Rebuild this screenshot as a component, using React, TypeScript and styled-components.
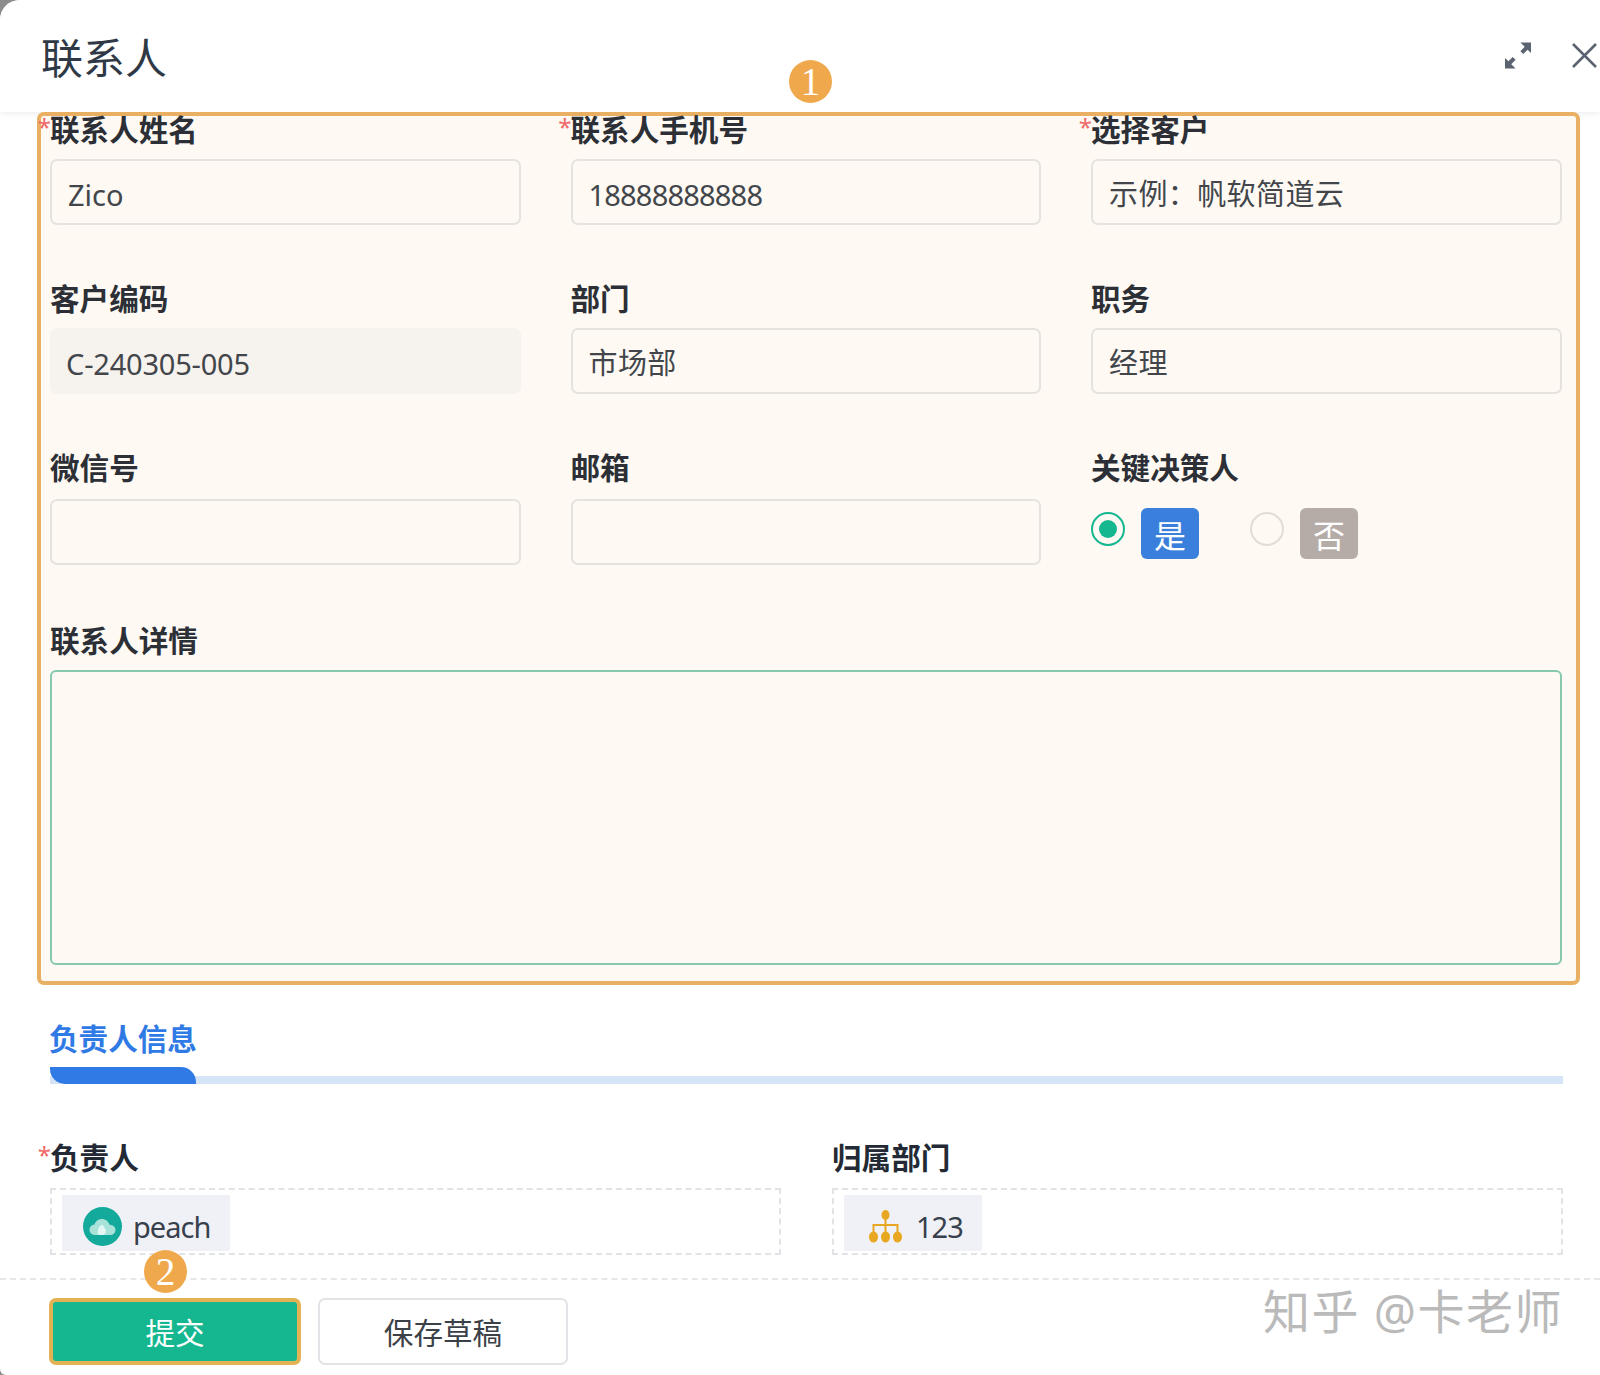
import React from "react";
import styled, { createGlobalStyle } from "styled-components";

const GlobalStyle = createGlobalStyle`
  html, body {
    margin: 0;
    padding: 0;
    background: #8c8c8c;
  }
  * {
    box-sizing: border-box;
  }
`;

const Modal = styled.div`
  position: relative;
  width: 1600px;
  height: 1375px;
  overflow: hidden;
  background: #ffffff;
  border-radius: 20px 0 0 6px;
  font-family: "Noto Sans", "Noto Sans CJK SC", sans-serif;
  color: #2f3640;
`;

const Header = styled.header`
  display: flex;
  align-items: center;
  justify-content: space-between;
  height: 112px;
  padding: 0 3px 0 41px;
  background: #ffffff;
  box-shadow: 0 2px 6px rgba(0, 0, 0, 0.07);
`;

const Title = styled.h1`
  margin: 0 0 -4px;
  font-size: 42px;
  font-weight: 400;
  line-height: 56px;
  color: #2f3946;
`;

const HeaderActions = styled.div`
  display: flex;
  align-items: center;
  gap: 41px;
  margin-bottom: 2px;
`;

const IconButton = styled.button`
  display: flex;
  padding: 0;
  border: 0;
  background: none;
`;

const FormBox = styled.section`
  position: relative;
  width: 1543px;
  margin-left: 37px;
  padding: 0 13px 16px 9px;
  background: #fef9f3;
  border: 4px solid #e9b063;
  border-radius: 7px;
`;

const FormGrid = styled.div`
  display: grid;
  grid-template-columns: repeat(3, 470.5px);
  column-gap: 50px;
  row-gap: 60px;
`;

const Field = styled.div<{ $wide?: boolean }>`
  grid-column: ${(p) => (p.$wide ? "1 / -1" : "auto")};
  margin-top: ${(p) => (p.$wide ? "2px" : "0")};
`;

const Label = styled.div<{ $required?: boolean; $gap?: number }>`
  position: relative;
  height: 28px;
  margin-bottom: ${(p) => p.$gap ?? 15}px;
  font-size: 29.6px;
  font-weight: 700;
  line-height: 28px;
  color: #2c3036;
  white-space: nowrap;
  ${(p) =>
    p.$required &&
    `&::before {
      content: "*";
      position: absolute;
      right: 100%;
      top: -3px;
      margin-right: -1px;
      font-size: 24px;
      font-weight: 400;
      color: #ef6a6a;
    }`}
`;

const Input = styled.div<{ $disabled?: boolean; $cjk?: boolean; $spacing?: number }>`
  display: flex;
  align-items: center;
  height: 66px;
  padding: ${(p) => (p.$cjk ? "0" : "5px")} 16px 0 ${(p) => (p.$disabled ? "14px" : "16px")};
  font-size: 29px;
  letter-spacing: ${(p) => p.$spacing ?? 0}px;
  color: #42464b;
  white-space: nowrap;
  background: ${(p) => (p.$disabled ? "#f6f2ed" : "transparent")};
  border: 2px solid ${(p) => (p.$disabled ? "#f6f2ed" : "#e6e2de")};
  border-radius: 7px;
`;

const TextArea = styled.div`
  height: 295px;
  border: 2px solid #86c9ad;
  border-radius: 6px;
`;

const RadioRow = styled.div`
  display: flex;
  align-items: flex-start;
  height: 66px;
  padding-top: 9px;
`;

const RadioOption = styled.div`
  display: flex;
  align-items: flex-start;
  width: 159px;
`;

const RadioDot = styled.span<{ $checked?: boolean }>`
  display: flex;
  align-items: center;
  justify-content: center;
  width: 34px;
  height: 34px;
  margin: 4px 16px 0 0;
  border: 2px solid ${(p) => (p.$checked ? "#14b78f" : "#e2dcd6")};
  border-radius: 50%;
  &::after {
    content: "";
    display: ${(p) => (p.$checked ? "block" : "none")};
    width: 18px;
    height: 18px;
    background: #14b78f;
    border-radius: 50%;
  }
`;

const RadioTag = styled.span<{ $color: string }>`
  display: flex;
  align-items: center;
  justify-content: center;
  width: 58px;
  height: 51px;
  font-size: 32px;
  color: #ffffff;
  background: ${(p) => p.$color};
  border-radius: 6px;
`;

const SectionTitle = styled.h2`
  height: 40px;
  margin: 34px 0 8px 49px;
  font-size: 29.6px;
  font-weight: 700;
  line-height: 40px;
  color: #2f7ae5;
`;

const SectionBar = styled.div`
  display: flex;
  align-items: flex-end;
  width: 1513px;
  height: 17px;
  margin-left: 50px;
  background: linear-gradient(#ffffff 9px, #d6e4f8 9px);
`;

const SectionBarActive = styled.div`
  width: 146px;
  height: 17px;
  background: #2f7ae5;
  border-radius: 0 15px 0 15px;
`;

const OwnerGrid = styled.div`
  display: grid;
  grid-template-columns: repeat(2, 731px);
  column-gap: 51px;
  margin: 60px 0 0 50px;
`;

const OwnerLabel = styled(Label)`
  color: #232a35;
`;

const PickBox = styled.div`
  height: 67px;
  padding: 5px 10px;
  border: 2px dashed #e2e3e6;
`;

const Chip = styled.div`
  display: inline-flex;
  align-items: center;
  gap: 11px;
  height: 56px;
  padding: 6px 20px 0 21px;
  font-size: 29px;
  letter-spacing: -1px;
  color: #38404c;
  background: #f0f1f6;
`;

const OrgChip = styled(Chip)`
  gap: 14px;
  padding: 6px 19px 0 25px;
`;

const Footer = styled.footer`
  display: flex;
  gap: 17px;
  margin-top: 23px;
  padding: 18px 0 0 49px;
  border-top: 2px dashed #e6e7ea;
`;

const PrimaryButton = styled.button`
  width: 252px;
  height: 67px;
  padding: 0;
  font-family: inherit;
  font-size: 29.6px;
  color: #ffffff;
  background: #14b78f;
  border: 4px solid #e2b255;
  border-radius: 7px;
`;

const GhostButton = styled.button`
  width: 250px;
  height: 67px;
  padding: 0;
  font-family: inherit;
  font-size: 29.6px;
  color: #3c4148;
  background: #ffffff;
  border: 2px solid #e2e3e6;
  border-radius: 7px;
`;

const StepBadge = styled.span<{ $left: number; $top: number }>`
  position: absolute;
  left: ${(p) => p.$left}px;
  top: ${(p) => p.$top}px;
  z-index: 3;
  display: flex;
  align-items: center;
  justify-content: center;
  width: 43px;
  height: 43px;
  font-family: "Liberation Serif", serif;
  font-size: 39px;
  font-weight: 400;
  color: #ffffff;
  background: #efa94c;
  border-radius: 50%;
`;

const Watermark = styled.div`
  position: absolute;
  right: 37px;
  bottom: 38px;
  font-size: 47px;
  line-height: 52px;
  letter-spacing: 1.5px;
  color: #bababa;
  white-space: nowrap;
`;

const ExpandIcon = () => (
  <svg width="26" height="27" viewBox="0 0 27 27" fill="#5c6370">
    <path d="M16 0h11v11l-3.500-3.500-4.500 4.500-3-3 4.500-4.500z" />
    <path d="M11 27H0V16l3.500 3.500 4.500-4.500 3 3-4.500 4.500z" />
  </svg>
);

const CloseIcon = () => (
  <svg width="25" height="25" viewBox="0 0 25 25" fill="none" stroke="#5c6370" strokeWidth="2.600">
    <path d="M1 1l23 23M24 1L1 24" />
  </svg>
);

const AvatarIcon = () => (
  <svg width="39" height="39" viewBox="0 0 39 39">
    <circle cx="19.500" cy="19.500" r="19.500" fill="#13a99b" />
    <path
      d="M12 28c-3.300 0-5.500-2.500-5.500-5.300 0-2.700 2.200-5 5-5.200 1-3.300 4-5.500 7.300-5.500 3.800 0 6.700 2.400 7.700 5.700 3.300 0 6 2.200 6 5 0 3.100-2.200 5.300-5.500 5.300z"
      fill="#a8e2d9"
    />
    <path d="M15.500 28c-2-4 0-9 4-10.500 1 2.800 3.500 4 3.500 6.500 0 2.200-1.500 4-3 4z" fill="#e3f6f2" />
  </svg>
);

const OrgIcon = () => (
  <svg width="33" height="33" viewBox="0 0 33 33" fill="#e8a720">
    <ellipse cx="16.500" cy="5" rx="4" ry="5" />
    <ellipse cx="4.500" cy="27" rx="4.500" ry="5.500" />
    <ellipse cx="16.500" cy="27" rx="4.500" ry="5.500" />
    <ellipse cx="28.500" cy="27" rx="4.500" ry="5.500" />
    <path d="M15.500 8h2v6H29.500v8h-2v-6H17.500v6h-2v-6H5.500v6h-2v-8H15.500z" />
  </svg>
);

type TopField = {
  label: string;
  value: string;
  required?: boolean;
  disabled?: boolean;
  cjk?: boolean;
  spacing?: number;
  gap?: number;
};

const topFields: TopField[] = [
  { label: "联系人姓名", value: "Zico", required: true },
  { label: "联系人手机号", value: "18888888888", required: true, spacing: -0.8 },
  { label: "选择客户", value: "示例：帆软简道云", required: true, cjk: true, spacing: 0.4 },
  { label: "客户编码", value: "C-240305-005", disabled: true, spacing: -0.2 },
  { label: "部门", value: "市场部", cjk: true, spacing: 0.4 },
  { label: "职务", value: "经理", cjk: true, spacing: 0.4 },
  { label: "微信号", value: "", gap: 17 },
  { label: "邮箱", value: "", gap: 17 },
];

export default function App() {
  return (
    <Modal>
      <GlobalStyle />
      <Header>
        <Title>联系人</Title>
        <HeaderActions>
          <IconButton>
            <ExpandIcon />
          </IconButton>
          <IconButton>
            <CloseIcon />
          </IconButton>
        </HeaderActions>
      </Header>
      <StepBadge $left={789} $top={60}>1</StepBadge>
      <FormBox>
        <FormGrid>
          {topFields.map((f) => (
            <Field key={f.label}>
              <Label $required={f.required} $gap={f.gap}>{f.label}</Label>
              <Input $disabled={f.disabled} $cjk={f.cjk} $spacing={f.spacing}>{f.value}</Input>
            </Field>
          ))}
          <Field>
            <Label $gap={17}>关键决策人</Label>
            <RadioRow>
              <RadioOption>
                <RadioDot $checked />
                <RadioTag $color="#3b7fdc">是</RadioTag>
              </RadioOption>
              <RadioOption>
                <RadioDot />
                <RadioTag $color="#b6aca7">否</RadioTag>
              </RadioOption>
            </RadioRow>
          </Field>
          <Field $wide>
            <Label>联系人详情</Label>
            <TextArea />
          </Field>
        </FormGrid>
      </FormBox>
      <SectionTitle>负责人信息</SectionTitle>
      <SectionBar>
        <SectionBarActive />
      </SectionBar>
      <OwnerGrid>
        <div>
          <OwnerLabel $required $gap={16}>负责人</OwnerLabel>
          <PickBox>
            <Chip>
              <AvatarIcon />
              peach
            </Chip>
          </PickBox>
        </div>
        <div>
          <OwnerLabel $gap={16}>归属部门</OwnerLabel>
          <PickBox>
            <OrgChip>
              <OrgIcon />
              123
            </OrgChip>
          </PickBox>
        </div>
      </OwnerGrid>
      <StepBadge $left={144} $top={1250}>2</StepBadge>
      <Footer>
        <PrimaryButton>提交</PrimaryButton>
        <GhostButton>保存草稿</GhostButton>
      </Footer>
      <Watermark>知乎 @卡老师</Watermark>
    </Modal>
  );
}
